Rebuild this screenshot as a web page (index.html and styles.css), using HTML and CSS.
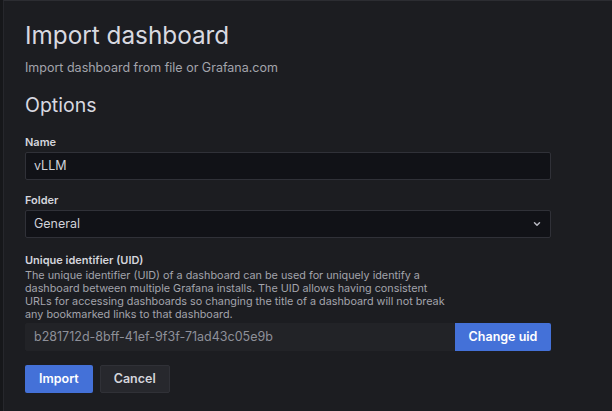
FILE: index.html
```html
<!DOCTYPE html>
<html lang="en">
<head>
<meta charset="utf-8">
<title>Import dashboard</title>
<link rel="stylesheet" href="styles.css">
</head>
<body>
<div class="page">
  <div class="content">
    <h1 class="title">Import dashboard</h1>
    <p class="subtitle">Import dashboard from file or Grafana.com</p>
    <h2 class="section">Options</h2>

    <div class="field">
      <label class="label">Name</label>
      <div class="input">vLLM</div>
    </div>

    <div class="field">
      <label class="label">Folder</label>
      <div class="input select">
        <span>General</span>
        <svg class="chevron" width="10" height="10" viewBox="0 0 10 10"><path d="M2.5 3.8 L5 6.2 L7.5 3.8" fill="none" stroke="#b8b9c2" stroke-width="1.5" stroke-linecap="round" stroke-linejoin="round"/></svg>
      </div>
    </div>

    <div class="field uid-field">
      <label class="label">Unique identifier (UID)</label>
      <p class="desc">The unique identifier (UID) of a dashboard can be used for uniquely identify a<br>dashboard between multiple Grafana installs. The UID allows having consistent<br>URLs for accessing dashboards so changing the title of a dashboard will not break<br>any bookmarked links to that dashboard.</p>
      <div class="uid-row">
        <div class="input disabled">b281712d-8bff-41ef-9f3f-71ad43c05e9b</div>
        <button class="btn primary">Change uid</button>
      </div>
    </div>

    <div class="actions">
      <button class="btn primary">Import</button>
      <button class="btn secondary">Cancel</button>
    </div>
  </div>
</div>
</body>
</html>
```

FILE: styles.css
```css
html, body {
  margin: 0;
  padding: 0;
  height: 100%;
}
body {
  background: #16171a;
  font-family: Inter, "Noto Sans", sans-serif;
  color: #ccccdc;
  overflow: hidden;
}
.page {
  margin-left: 3px;
  height: 100%;
  box-sizing: border-box;
  background: #1c1d21;
  border-left: 1px solid #26272c;
  border-top: 1px solid #2c2d32;
}
.content {
  width: 526px;
  padding: 20px 0 0 21px;
}
.title {
  margin: 0;
  font-size: 24.3px;
  font-weight: 400;
  line-height: 28px;
  color: #d8d9e0;
}
.subtitle {
  margin: 11px 0 0;
  font-size: 12.5px;
  line-height: 16px;
  color: #a3a4ac;
}
.section {
  margin: 17px 0 0;
  font-size: 19.5px;
  font-weight: 400;
  line-height: 24px;
  color: #d8d9e0;
}
.field {
  margin-top: 18px;
}
.field + .field {
  margin-top: 13.5px;
}
.field + .uid-field {
  margin-top: 15px;
}
.label {
  display: block;
  font-size: 11px;
  font-weight: 600;
  line-height: 14px;
  color: #d4d5dc;
  margin-bottom: 2.5px;
}
.input {
  box-sizing: border-box;
  height: 28px;
  display: flex;
  align-items: center;
  padding: 0 8px;
  background: #111217;
  border: 1px solid #303138;
  border-radius: 2px;
  font-size: 12.5px;
  color: #d0d1d8;
}
.select {
  justify-content: space-between;
}
.chevron {
  margin-right: 0;
}
.desc {
  margin: -0.5px 0 1px;
  font-size: 10.8px;
  line-height: 13.3px;
  color: #a3a4ac;
}
.uid-row {
  display: flex;
}
.disabled {
  flex: 1;
  background: #222327;
  border-color: #222327;
  border-radius: 2px 0 0 2px;
  color: #8e9099;
  font-size: 12.5px;
}
.btn {
  box-sizing: border-box;
  height: 28px;
  padding: 0 13px;
  font-family: Inter, "Noto Sans", sans-serif;
  font-size: 12.5px;
  font-weight: 600;
  border-radius: 2px;
  border: 1px solid transparent;
  white-space: nowrap;
  cursor: pointer;
}
.primary {
  background: #4471d8;
  color: #ffffff;
}
.uid-row .primary {
  width: 96px;
  padding: 0;
  border-radius: 0 2px 2px 0;
}
.secondary {
  background: #27282d;
  border-color: #303137;
  color: #d4d5dc;
}
.actions {
  display: flex;
  gap: 7px;
  margin-top: 14px;
}
```
